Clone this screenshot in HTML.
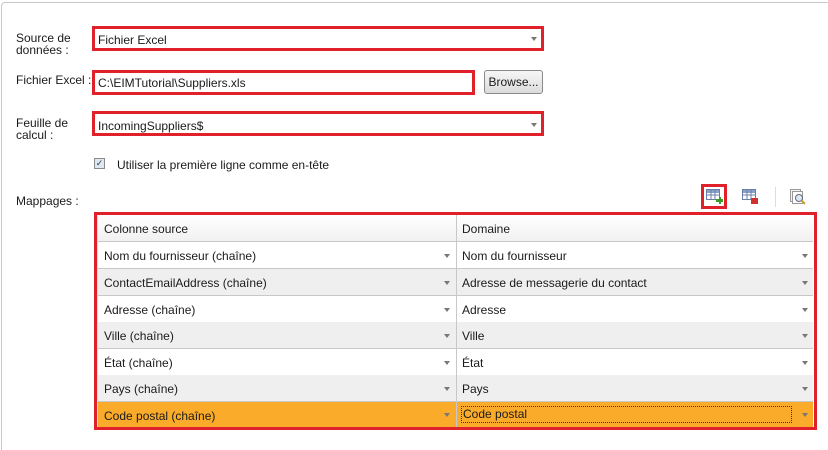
<!DOCTYPE html>
<html style="width:828px;height:450px;overflow:hidden"><head><meta charset="utf-8"><style>
*{margin:0;padding:0;box-sizing:border-box}
body{width:828px;height:450px;background:#fff;font-family:"Liberation Sans","DejaVu Sans",sans-serif;font-size:12px;color:#1a1a1a;position:relative;overflow:hidden}
.a{position:absolute}
.red{border:3px solid #e0202a}
.lbl{font-size:12px;line-height:12px}
.arr{position:absolute;width:0;height:0;border-left:3px solid transparent;border-right:3px solid transparent;border-top:4px solid #777}
.row{position:absolute;left:98px;width:715px;height:27px;border-bottom:1px solid #c8c8c8}
.row div{position:absolute;top:7px;font-size:12px}
.sep{position:absolute;left:358px;top:0;height:100%;border-left:1px solid #c8c8c8}
</style></head><body>
<div class="a" style="left:1px;top:2px;width:840px;height:460px;border:1px solid #c8c8c8;border-radius:4px"></div>

<div class="a lbl" style="left:16px;top:32px">Source de<br>données :</div>
<div class="a red" style="left:92px;top:26px;width:452px;height:25px"></div>
<div class="a" style="left:98px;top:33px">Fichier Excel</div>
<div class="arr" style="left:531px;top:37px"></div>

<div class="a lbl" style="left:16px;top:74px">Fichier Excel :</div>
<div class="a red" style="left:92px;top:70px;width:383px;height:25px"></div>
<div class="a" style="left:98px;top:76px">C:\EIMTutorial\Suppliers.xls</div>
<div class="a" style="left:484px;top:70px;width:59px;height:24px;border:1px solid #8a8a8a;border-radius:3px;background:linear-gradient(#f6f6f6,#dcdcdc);text-align:center;line-height:22px">Browse...</div>

<div class="a lbl" style="left:16px;top:117px">Feuille de<br>calcul :</div>
<div class="a red" style="left:92px;top:111px;width:452px;height:25px"></div>
<div class="a" style="left:98px;top:119px">IncomingSuppliers$</div>
<div class="arr" style="left:531px;top:123px"></div>

<div class="a" style="left:94px;top:158px;width:11px;height:11px;border:1px solid #8a8a8a;background:#dde8f0;font-size:9px;line-height:9px;text-align:center;color:#335">✓</div>
<div class="a" style="left:117px;top:158px">Utiliser la première ligne comme en-tête</div>

<div class="a lbl" style="left:16px;top:195px">Mappages :</div>
<div class="a red" style="left:701px;top:184px;width:26px;height:25px"></div>
<svg class="a" style="left:706px;top:189px" width="18" height="16"><rect x="0.5" y="0.5" width="13" height="10" fill="#fff" stroke="#6a7fa8"/><rect x="1" y="1" width="12" height="3" fill="#8aa0c8"/><path d="M5 1v10M9 1v10M1 6h12" stroke="#6a7fa8"/><path d="M11 8h3v-2h2v2h2v3h-2v2h-2v-2h-3z" fill="#3a9a2a" transform="translate(-1,2)"/></svg>
<svg class="a" style="left:742px;top:189px" width="18" height="16"><rect x="0.5" y="0.5" width="13" height="10" fill="#fff" stroke="#6a7fa8"/><rect x="1" y="1" width="12" height="3" fill="#8aa0c8"/><path d="M5 1v10M9 1v10M1 6h12" stroke="#6a7fa8"/><rect x="9" y="9" width="7" height="6" fill="#d03030"/></svg>
<div class="a" style="left:775px;top:187px;width:1px;height:20px;background:#ddd"></div>
<svg class="a" style="left:789px;top:188px" width="18" height="18"><rect x="1.5" y="1.5" width="10" height="12" fill="#f4f4f4" stroke="#999"/><rect x="3.5" y="3.5" width="10" height="12" fill="#fff" stroke="#999"/><circle cx="10" cy="10" r="3.5" fill="#dbe9f5" stroke="#667"/><path d="M12.5 12.5l3.5 3.5" stroke="#c8a030" stroke-width="2"/></svg>

<div class="a red" style="left:94px;top:212px;width:723px;height:218px"></div>
<div class="a" style="left:97px;top:215px;width:1px;height:212px;background:#cfe0ef"></div>
<div class="row" style="top:215px;background:linear-gradient(#fff,#f1f1f1)"><div style="left:6px">Colonne source</div><div style="left:364px">Domaine</div><span class="sep"></span></div>
<div class="row" style="top:242px;background:#fff"><div style="left:6px">Nom du fournisseur (chaîne)</div><div style="left:364px">Nom du fournisseur</div><span class="sep"></span><span class="arr" style="left:346px;top:12px"></span><span class="arr" style="left:704px;top:12px"></span></div>
<div class="row" style="top:269px;background:#efefef"><div style="left:6px">ContactEmailAddress (chaîne)</div><div style="left:364px">Adresse de messagerie du contact</div><span class="sep"></span><span class="arr" style="left:346px;top:12px"></span><span class="arr" style="left:704px;top:12px"></span></div>
<div class="row" style="top:296px;background:#fff"><div style="left:6px">Adresse (chaîne)</div><div style="left:364px">Adresse</div><span class="sep"></span><span class="arr" style="left:346px;top:12px"></span><span class="arr" style="left:704px;top:12px"></span></div>
<div class="row" style="top:322px;background:#efefef"><div style="left:6px">Ville (chaîne)</div><div style="left:364px">Ville</div><span class="sep"></span><span class="arr" style="left:346px;top:12px"></span><span class="arr" style="left:704px;top:12px"></span></div>
<div class="row" style="top:349px;background:#fff"><div style="left:6px">État (chaîne)</div><div style="left:364px">État</div><span class="sep"></span><span class="arr" style="left:346px;top:12px"></span><span class="arr" style="left:704px;top:12px"></span></div>
<div class="row" style="top:375px;background:#efefef"><div style="left:6px">Pays (chaîne)</div><div style="left:364px">Pays</div><span class="sep"></span><span class="arr" style="left:346px;top:12px"></span><span class="arr" style="left:704px;top:12px"></span></div>
<div class="row" style="top:402px;height:25px;background:#fbab2a;border-bottom:none"><div style="left:6px">Code postal (chaîne)</div><div style="left:363px;top:4px;width:331px;height:17px;border:1px dotted #333;padding-left:1px;line-height:15px">Code postal</div><span class="sep"></span><span class="arr" style="left:346px;top:11px"></span><span class="arr" style="left:704px;top:11px"></span></div>
</body></html>
